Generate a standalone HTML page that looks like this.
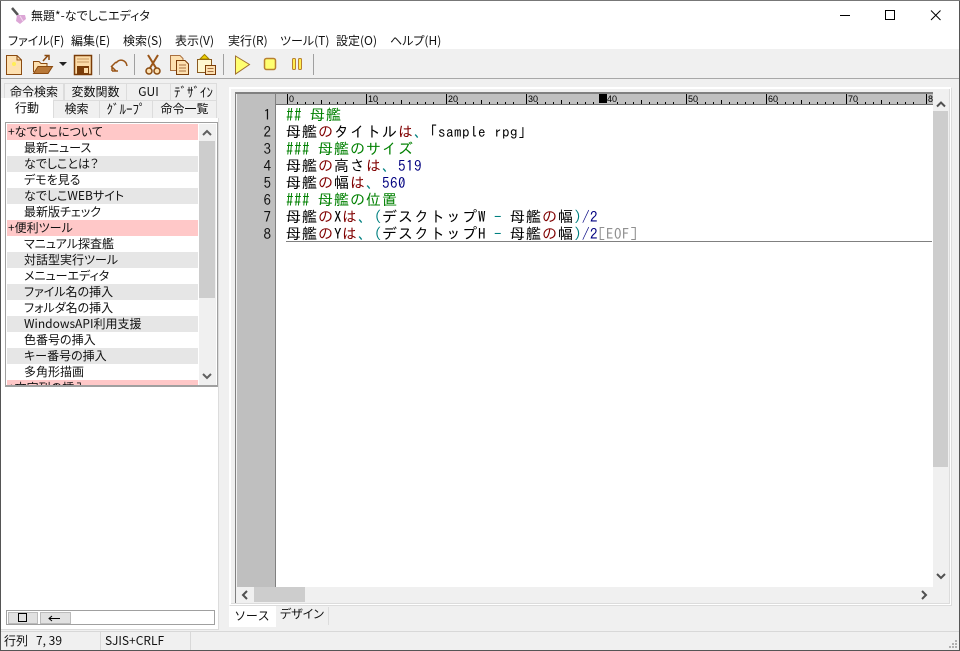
<!DOCTYPE html>
<html lang="ja"><head><meta charset="utf-8"><style>
html,body{margin:0;padding:0;width:960px;height:651px;overflow:hidden;background:#f0f0f0}
body{position:relative;font-family:"Noto Sans CJK JP","Liberation Sans",sans-serif;font-size:12px;color:#111;font-feature-settings:"palt"}
.a{position:absolute}
.t{position:absolute;white-space:nowrap;line-height:16px}
.tab{position:absolute;background:#f0f0f0;border:1px solid #dcdcdc;box-sizing:border-box;text-align:center;line-height:16px;font-size:12px;white-space:nowrap}
.it{position:absolute;left:7px;width:191px;height:16px;line-height:15px;font-size:12px;padding-left:17px;box-sizing:border-box;white-space:nowrap;overflow:hidden}
.hd{background:#ffc8c8;padding-left:1px}.g{background:#e6e6e6}
.ln{position:absolute;left:286px;height:17px;line-height:17px;font-family:"IPAGothic","Liberation Mono",monospace;font-size:15px;letter-spacing:1px;white-space:pre;color:#000;font-feature-settings:normal}
.h{letter-spacing:.5px}
.gr{color:#008000}.r{color:#800000}.c{color:#008080}.n{color:#000080}.e{color:#909090}
.no{position:absolute;left:237px;width:34px;text-align:right;font-family:"IPAGothic",monospace;font-size:15px;line-height:17px;height:17px}
.m{position:absolute;top:33px;line-height:16px;font-size:12px;white-space:nowrap}
.sep{position:absolute;top:54px;width:1px;height:21px;background:#a0a0a0}
.rl{position:absolute;top:94px;font-size:9px;line-height:10px;font-family:"Liberation Sans",sans-serif;color:#000;border-left:1px solid #000;padding-left:1px;height:10px}
</style></head><body>
<div class="a" style="left:0;top:0;width:960px;height:49px;background:#fff"></div>
<svg class="a" style="left:10px;top:6px" width="20" height="20" viewBox="0 0 20 20"><path d="M2 2L8 9" stroke="#555" stroke-width="2.5"/><path d="M7 9L15 9L16 13L10 18L6 15Z" fill="#dca6d6"/><path d="M10 10L13 15" stroke="#f0d8ec"/></svg>
<div class="t" style="left:31px;top:7px;font-size:12px;line-height:17px">無題*-なでしこエディタ</div>
<svg class="a" style="left:830px;top:0" width="130" height="30"><path d="M10 15.500H20" stroke="#000"/><rect x="55.500" y="10.500" width="9" height="9" fill="none" stroke="#000"/><path d="M101 10.500L110.500 20M110.500 10.500L101 20" stroke="#000"/></svg>
<div class="m" style="left:8px">ファイル(F)</div><div class="m" style="left:71px">編集(E)</div><div class="m" style="left:123px">検索(S)</div><div class="m" style="left:175px">表示(V)</div><div class="m" style="left:228px">実行(R)</div><div class="m" style="left:280px">ツール(T)</div><div class="m" style="left:336px">設定(O)</div><div class="m" style="left:390px">ヘルプ(H)</div>

<div class="a" style="left:0;top:78px;width:960px;height:1px;background:#a8a8a8"></div>
<svg class="a" style="left:0;top:50px" width="320" height="30" fill="none">
<path d="M6.500 5.500H17L21.500 10V24.500H6.500Z" fill="#fde0b0" stroke="#8a4a10"/><path d="M17 5.500V10H21.500" stroke="#8a4a10"/><circle cx="14" cy="14" r="2" fill="#ffee55"/>
<path d="M33.500 22V11.500H39L41 13.500H47V16" fill="#fde0b0" stroke="#8a4a10"/><path d="M33.500 23.500L38 16.500H52.500L48 23.500Z" fill="#b87838" stroke="#8a4a10"/><path d="M43 11L48 5.500M44.500 5.500H49V10" stroke="#8a4a10" stroke-width="1.500"/>
<path d="M59 12H67L63 16Z" fill="#222"/>
<rect x="74.500" y="5.500" width="17" height="19" fill="#fddca8" stroke="#7a3c08" stroke-width="1.500"/><rect x="77" y="16" width="12" height="8" fill="#7a3c08"/><rect x="84" y="18" width="4" height="5" fill="#fddca8"/><path d="M77 9H89M77 12H89" stroke="#c89860"/>
<path d="M116 21L111.500 16.500L116 12M112 21H118M112 16.500V21M116 13C120 8 126 10 127 16" stroke="#9a5518" stroke-width="1.500"/>
<path d="M148 5L156 18M158 5L150 18" stroke="#9a5518" stroke-width="2"/><circle cx="149" cy="21" r="3" fill="#fde0b0" stroke="#8a4a10" stroke-width="1.500"/><circle cx="157" cy="21" r="3" fill="#fde0b0" stroke="#8a4a10" stroke-width="1.500"/>
<path d="M170.500 5.500H180L183 8.500V20.500H170.500Z" fill="#fde0b0" stroke="#a97040"/><path d="M176.500 10.500H185L188.500 14V24.500H176.500Z" fill="#fde0b0" stroke="#7a3c08"/><path d="M179 15H186M179 18H186M179 21H186" stroke="#a97040"/>
<path d="M197.500 9.500H211.500V22.500H197.500Z" fill="#fff7d0" stroke="#8a5a20"/><path d="M200 9L204.500 4.500L209 9Z" fill="#f0d000" stroke="#a08000"/><path d="M205.500 15.500H215.500V24.500H205.500Z" fill="#fde0b0" stroke="#7a3c08"/><path d="M207.500 18.500H213.500M207.500 21.500H213.500" stroke="#a97040"/>
<path d="M235.500 6L249.500 14.500L235.500 24Z" fill="#ffff70" stroke="#a07030"/>
<rect x="264.500" y="8.500" width="11" height="11" rx="2" fill="#ffff70" stroke="#b88030" stroke-width="1.500"/>
<rect x="292.500" y="8.500" width="3" height="11" rx="1" fill="#ffee50" stroke="#b88030"/><rect x="298.500" y="8.500" width="3" height="11" rx="1" fill="#ffee50" stroke="#b88030"/>
</svg>
<div class="sep" style="left:99px"></div><div class="sep" style="left:134px"></div><div class="sep" style="left:223px"></div><div class="sep" style="left:313px"></div>

<!-- left panel -->
<div class="tab" style="left:4px;top:83px;width:60px;height:18px">命令検索</div>
<div class="tab" style="left:64px;top:83px;width:63px;height:18px">変数関数</div>
<div class="tab" style="left:126px;top:83px;width:45px;height:18px">GUI</div>
<div class="tab" style="left:170px;top:83px;width:47px;height:18px;font-size:13px;font-feature-settings:normal">ﾃﾞｻﾞｲﾝ</div>
<div class="tab" style="left:53px;top:100px;width:47px;height:19px">検索</div>
<div class="tab" style="left:99px;top:100px;width:54px;height:19px;font-size:13px;font-feature-settings:normal">ｸﾞﾙｰﾌﾟ</div>
<div class="tab" style="left:152px;top:100px;width:65px;height:19px">命令一覧</div>
<div class="a" style="left:1px;top:118px;width:217px;height:511px;background:#fff;border-right:1px solid #dcdcdc;border-bottom:1px solid #dcdcdc"></div>
<div class="a" style="left:1px;top:98px;width:52px;height:22px;background:#fff;text-align:center;line-height:20px;font-size:12px">行動</div>

<div class="a" style="left:5px;top:122px;width:213px;height:265px;box-sizing:border-box;border:1px solid #a0a0a0;border-bottom-width:2px;background:#fff;overflow:hidden"></div>
<div class="a" style="left:7px;top:124px;width:191px;height:261px;overflow:hidden">
<div class="it hd" style="left:0;top:0">+なでしこについて</div>
<div class="it" style="left:0;top:16px">最新ニュース</div>
<div class="it g" style="left:0;top:32px">なでしことは？</div>
<div class="it" style="left:0;top:48px">デモを見る</div>
<div class="it g" style="left:0;top:64px">なでしこWEBサイト</div>
<div class="it" style="left:0;top:80px">最新版チェック</div>
<div class="it hd" style="left:0;top:96px">+便利ツール</div>
<div class="it" style="left:0;top:112px">マニュアル探査艦</div>
<div class="it g" style="left:0;top:128px">対話型実行ツール</div>
<div class="it" style="left:0;top:144px">メニューエディタ</div>
<div class="it g" style="left:0;top:160px">ファイル名の挿入</div>
<div class="it" style="left:0;top:176px">フォルダ名の挿入</div>
<div class="it g" style="left:0;top:192px">WindowsAPI利用支援</div>
<div class="it" style="left:0;top:208px">色番号の挿入</div>
<div class="it g" style="left:0;top:224px">キー番号の挿入</div>
<div class="it" style="left:0;top:240px">多角形描画</div>
<div class="it hd" style="left:0;top:256px">+文字列の挿入</div>
</div>
<div class="a" style="left:199px;top:124px;width:17px;height:261px;background:#f0f0f0"></div>
<div class="a" style="left:199px;top:141px;width:16px;height:157px;background:#cdcdcd"></div>
<svg class="a" style="left:199px;top:124px" width="17" height="261" fill="none" stroke="#606060" stroke-width="2"><path d="M4 11L8 7L12 11M4 250L8 254L12 250"/></svg>

<div class="a" style="left:6px;top:610px;width:209px;height:15px;box-sizing:border-box;border:1px solid #a0a0a0;background:#fff"></div>
<div class="a" style="left:8px;top:612px;width:30px;height:12px;background:#e1e1e1;border:1px solid #bbb;box-sizing:border-box"></div>
<div class="a" style="left:18px;top:613px;width:9px;height:9px;border:1px solid #000;box-sizing:border-box"></div>
<div class="a" style="left:40px;top:612px;width:31px;height:12px;background:#e1e1e1;border:1px solid #bbb;box-sizing:border-box"></div>
<svg class="a" style="left:48px;top:614px" width="14" height="9" fill="none" stroke="#000"><path d="M1 4.500H12M4 2L1 4.500L4 7"/></svg>

<!-- right panel -->
<div class="a" style="left:229px;top:87px;width:723px;height:519px;box-sizing:border-box;border:1px solid #fff;border-right:1px solid #dcdcdc;border-bottom:1px solid #dcdcdc;background:#fff"></div>
<div class="a" style="left:231px;top:89px;width:719px;height:515px;background:#f0f0f0;border-right:1px solid #dcdcdc;border-bottom:1px solid #dcdcdc;box-sizing:border-box"></div>
<div class="a" style="left:235px;top:92px;width:1px;height:511px;background:#808080"></div>
<div class="a" style="left:236px;top:92px;width:697px;height:2px;background:#808080"></div>
<div class="a" style="left:237px;top:94px;width:696px;height:493px;background:#fff"></div>
<div class="a" style="left:237px;top:94px;width:38px;height:493px;background:#bfbfbf"></div>
<div class="a" style="left:275px;top:94px;width:1px;height:493px;background:#808080"></div>
<div class="a" style="left:276px;top:94px;width:657px;height:10px;background:#c0c0c0"></div>
<div class="a" style="left:276px;top:104px;width:657px;height:1px;background:#707070"></div>
<svg class="a" style="left:285px;top:94px" width="648" height="10" stroke="#000"><path d="M12.500 8V10M20.500 8V10M28.500 8V10M36.500 6V10M44.500 8V10M52.500 8V10M60.500 8V10M68.500 8V10M92.500 8V10M100.500 8V10M108.500 8V10M116.500 6V10M124.500 8V10M132.500 8V10M140.500 8V10M148.500 8V10M172.500 8V10M180.500 8V10M188.500 8V10M196.500 6V10M204.500 8V10M212.500 8V10M220.500 8V10M228.500 8V10M252.500 8V10M260.500 8V10M268.500 8V10M276.500 6V10M284.500 8V10M292.500 8V10M300.500 8V10M308.500 8V10M332.500 8V10M340.500 8V10M348.500 8V10M356.500 6V10M364.500 8V10M372.500 8V10M380.500 8V10M388.500 8V10M412.500 8V10M420.500 8V10M428.500 8V10M436.500 6V10M444.500 8V10M452.500 8V10M460.500 8V10M468.500 8V10M492.500 8V10M500.500 8V10M508.500 8V10M516.500 6V10M524.500 8V10M532.500 8V10M540.500 8V10M548.500 8V10M572.500 8V10M580.500 8V10M588.500 8V10M596.500 6V10M604.500 8V10M612.500 8V10M620.500 8V10M628.500 8V10"/></svg>
<div class="rl" style="left:287px">0</div><div class="rl" style="left:366px">10</div><div class="rl" style="left:446px">20</div><div class="rl" style="left:526px">30</div><div class="rl" style="left:606px;border-left:0">40</div><div class="rl" style="left:686px">50</div><div class="rl" style="left:766px">60</div><div class="rl" style="left:846px">70</div><div class="rl" style="left:926px">8</div>
<div class="a" style="left:599px;top:94px;width:8px;height:9px;background:#000"></div>

<div class="no" style="top:106px">1</div><div class="no" style="top:123px">2</div><div class="no" style="top:140px">3</div><div class="no" style="top:157px">4</div><div class="no" style="top:174px">5</div><div class="no" style="top:191px">6</div><div class="no" style="top:208px">7</div><div class="no" style="top:225px">8</div>
<div class="ln" style="top:106px"><span class="gr"><span class="h">## </span>母艦</span></div>
<div class="ln" style="top:123px">母艦<span class="r">の</span>タイトル<span class="r">は</span><span class="c">、</span><span class="h">｢sample rpg｣</span></div>
<div class="ln gr" style="top:140px"><span class="h">### </span>母艦のサイズ</div>
<div class="ln" style="top:157px">母艦<span class="r">の</span>高さ<span class="r">は</span><span class="c">、</span><span class="n h">519</span></div>
<div class="ln" style="top:174px">母艦<span class="r">の</span>幅<span class="r">は</span><span class="c">、</span><span class="n h">560</span></div>
<div class="ln gr" style="top:191px"><span class="h">### </span>母艦の位置</div>
<div class="ln" style="top:208px">母艦<span class="r">の</span><span class="h">X</span><span class="r">は</span><span class="c">、<span class="h">(</span></span>デスクトップ<span class="h">W </span><span class="c h">- </span>母艦<span class="r">の</span>幅<span class="c h">)</span><span class="n h">/2</span></div>
<div class="ln" style="top:225px">母艦<span class="r">の</span><span class="h">Y</span><span class="r">は</span><span class="c">、<span class="h">(</span></span>デスクトップ<span class="h">H </span><span class="c h">- </span>母艦<span class="r">の</span>幅<span class="c h">)</span><span class="n h">/2</span><span class="e h">[EOF]</span></div>
<div class="a" style="left:286px;top:241px;width:646px;height:1px;background:#808080"></div>

<div class="a" style="left:933px;top:94px;width:16px;height:493px;background:#f0f0f0"></div>
<div class="a" style="left:933px;top:111px;width:15px;height:356px;background:#cdcdcd"></div>
<div class="a" style="left:237px;top:587px;width:712px;height:16px;background:#f0f0f0"></div>
<div class="a" style="left:254px;top:587px;width:51px;height:15px;background:#cdcdcd"></div>
<svg class="a" style="left:933px;top:97px" width="16" height="490" fill="none" stroke="#505050" stroke-width="2"><path d="M4 9.500L8 5.500L12 9.500M4 477L8 481L12 477"/></svg>
<svg class="a" style="left:237px;top:587px" width="696" height="16" fill="none" stroke="#505050" stroke-width="2"><path d="M10 4L6 8L10 12M685 4L689 8L685 12"/></svg>

<div class="a" style="left:229px;top:606px;width:47px;height:21px;background:#fff;text-align:center;line-height:20px;font-size:12px;letter-spacing:1px">ソース</div>
<div class="a" style="left:276px;top:607px;width:53px;height:18px;box-sizing:border-box;border-right:1px solid #dcdcdc;text-align:center;line-height:14px;font-size:12px">デザイン</div>

<!-- status -->
<div class="a" style="left:0;top:631px;width:960px;height:1px;background:#d8d8d8"></div>
<div class="a" style="left:100px;top:632px;width:1px;height:18px;background:#d8d8d8"></div>
<div class="a" style="left:190px;top:632px;width:1px;height:18px;background:#d8d8d8"></div>
<div class="t" style="left:4px;top:633px">行列</div><div class="t" style="left:36px;top:633px">7, 39</div><div class="t" style="left:105px;top:633px">SJIS+CRLF</div>
<svg class="a" style="left:948px;top:639px" width="11" height="11" fill="#b0b0b0"><rect x="7" y="1" width="2" height="2"/><rect x="4" y="4" width="2" height="2"/><rect x="7" y="4" width="2" height="2"/><rect x="1" y="7" width="2" height="2"/><rect x="4" y="7" width="2" height="2"/><rect x="7" y="7" width="2" height="2"/></svg>

<!-- window border -->
<div class="a" style="left:0;top:0;width:1px;height:651px;background:#555"></div>
<div class="a" style="left:959px;top:0;width:1px;height:651px;background:#555"></div>
<div class="a" style="left:0;top:650px;width:960px;height:1px;background:#555"></div>
<div class="a" style="left:0;top:0;width:960px;height:1px;background:#777"></div>
</body></html>
